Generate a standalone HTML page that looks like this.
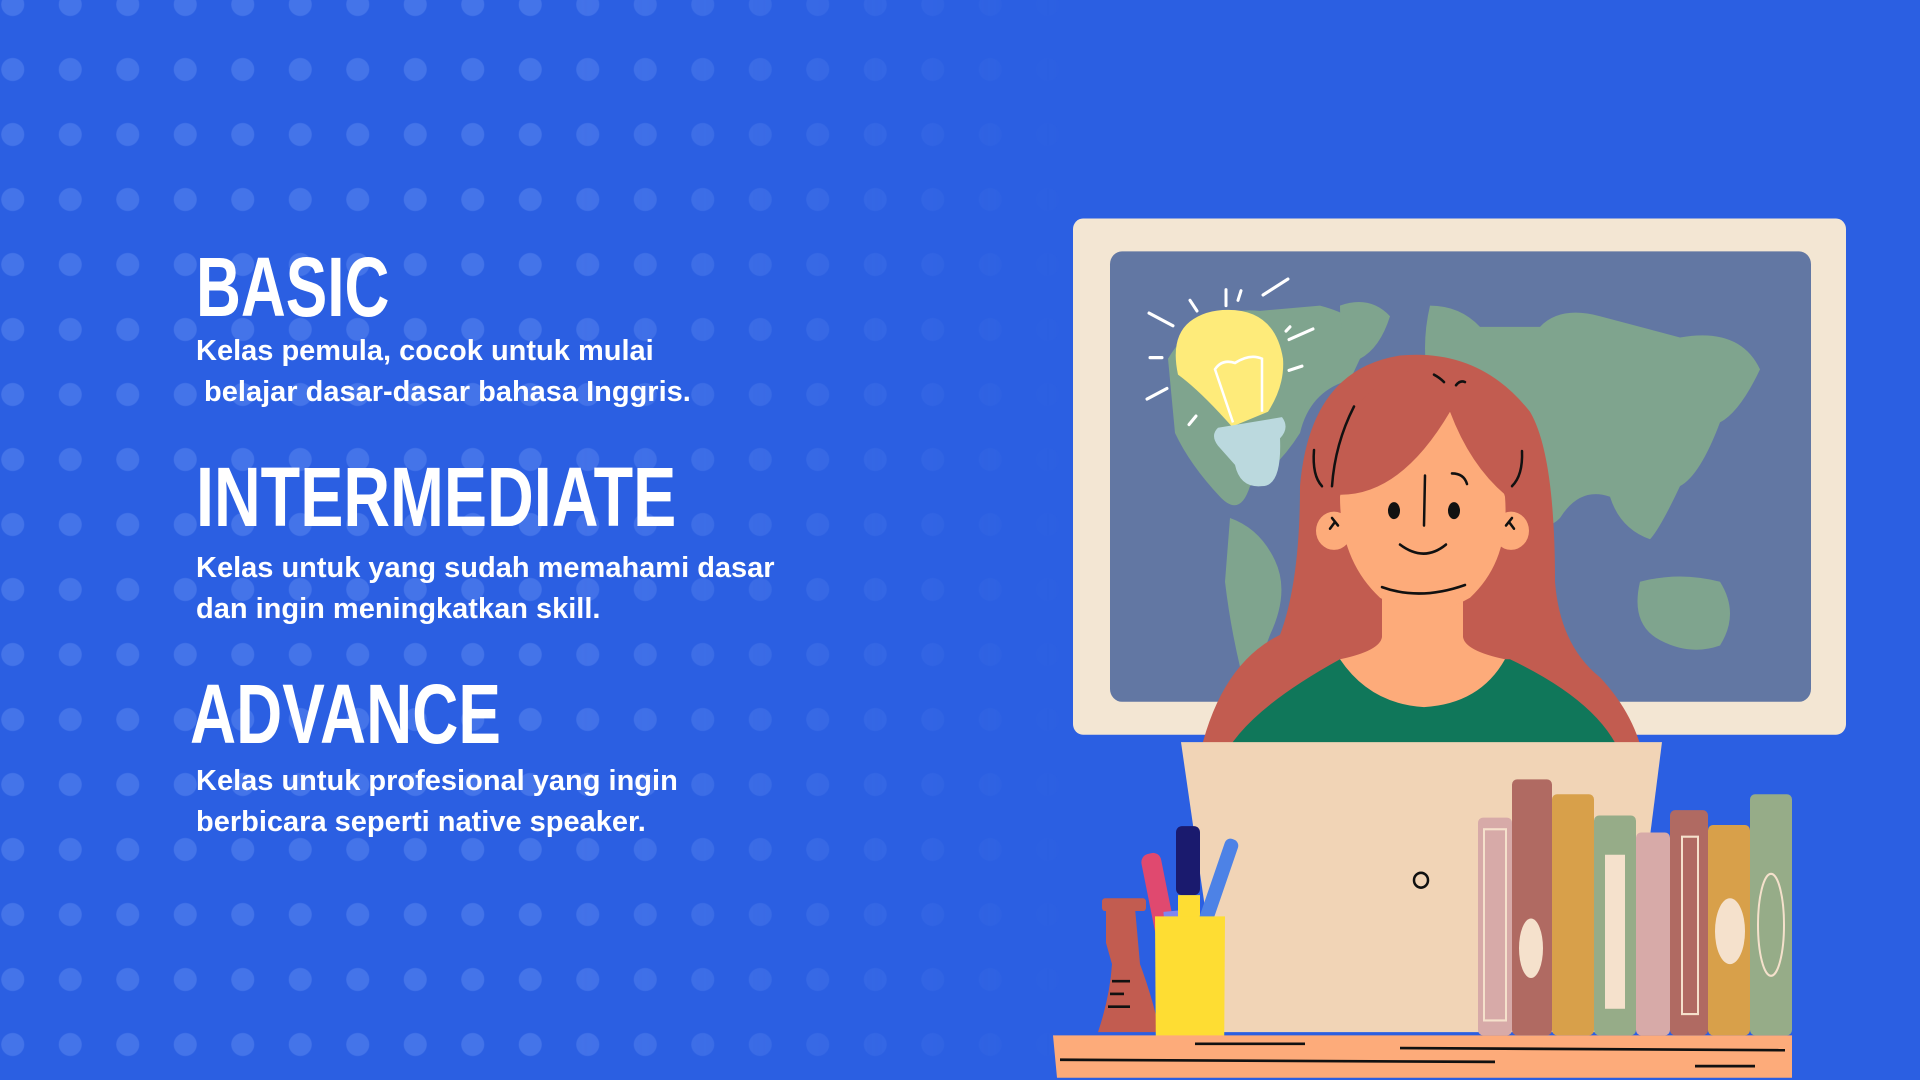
<!DOCTYPE html>
<html><head><meta charset="utf-8"><style>
html,body{margin:0;padding:0}
body{width:1920px;height:1080px;overflow:hidden;background:#2B5FE2;position:relative;font-family:"Liberation Sans",sans-serif}
.dots{position:absolute;left:0;top:0;width:1200px;height:1080px;
background-image:radial-gradient(circle at 50% 50%, rgba(110,150,245,.38) 0 11px, transparent 12px);
background-size:57.5px 65px;background-position:-16px -28px;
-webkit-mask-image:linear-gradient(90deg,#000 0%,#000 45%,transparent 90%);mask-image:linear-gradient(90deg,#000 0%,#000 45%,transparent 90%)}
.h{position:absolute;color:#fff;font-weight:bold;font-size:84px;line-height:1;transform-origin:0 0;white-space:nowrap}
.p{position:absolute;left:196px;color:#fff;font-weight:bold;font-size:29px;line-height:41px;white-space:pre}
</style></head><body>
<div class="dots"></div>
<div class="h" style="left:196px;top:245px;transform:scaleX(0.74)">BASIC</div>
<div class="h" style="left:196px;top:455px;transform:scaleX(0.77)">INTERMEDIATE</div>
<div class="h" style="left:190px;top:672px;transform:scaleX(0.76)">ADVANCE</div>
<div class="p" style="top:331px">Kelas pemula, cocok untuk mulai
 belajar dasar-dasar bahasa Inggris.</div>
<div class="p" style="top:548px">Kelas untuk yang sudah memahami dasar
dan ingin meningkatkan skill.</div>
<div class="p" style="top:761px">Kelas untuk profesional yang ingin
berbicara seperti native speaker.</div>
<svg style="position:absolute;left:0;top:0" width="1920" height="1080" viewBox="0 0 1920 1080">
<g transform="matrix(1 0 0 1.0622 0 -13.07)">
<rect x="1073" y="218" width="773" height="486" rx="10" fill="#F3E6D3"/>
<rect x="1110" y="249" width="701" height="424" rx="12" fill="#6277A3"/>
<g fill="#7FA48E">
<path d="M1168 350 Q1200 300 1260 305 L1320 300 Q1360 310 1370 330 L1350 370 Q1310 380 1300 420 Q1280 450 1250 470 Q1240 500 1220 480 Q1190 450 1175 420 Z"/>
<path d="M1230 500 Q1260 510 1275 540 Q1290 570 1270 610 Q1255 650 1240 640 Q1230 600 1225 560 Z"/>
<path d="M1340 300 Q1370 290 1390 310 Q1380 340 1360 350 Q1340 340 1340 300 Z"/>
<path d="M1430 300 Q1460 300 1480 320 L1540 320 Q1560 300 1600 310 L1680 330 Q1740 320 1760 360 Q1740 400 1720 410 Q1700 460 1680 470 Q1660 510 1650 520 Q1620 510 1610 480 Q1580 470 1560 500 Q1540 520 1520 480 Q1500 440 1470 430 Q1440 420 1430 380 Q1420 340 1430 300 Z"/>
<path d="M1640 560 Q1680 550 1720 560 Q1740 590 1720 620 Q1690 630 1660 615 Q1630 600 1640 560 Z"/>
<path d="M1440 460 Q1480 470 1490 510 Q1480 560 1460 560 Q1440 520 1440 460 Z"/>
</g>
<g stroke="#fff" stroke-width="3" stroke-linecap="round">
<line x1="1149" y1="307" x2="1173" y2="319"/><line x1="1190" y1="295" x2="1197" y2="305"/><line x1="1226" y1="285" x2="1226" y2="300"/><line x1="1241" y1="286" x2="1238" y2="295"/><line x1="1263" y1="290" x2="1288" y2="275"/><line x1="1289" y1="332" x2="1313" y2="322"/><line x1="1289" y1="361" x2="1302" y2="357"/><line x1="1150" y1="349" x2="1162" y2="349"/><line x1="1147" y1="388" x2="1167" y2="378"/><line x1="1189" y1="412" x2="1196" y2="404"/><line x1="1286" y1="324" x2="1290" y2="320"/>
</g>
<path d="M1228 304 Q1275 304 1283 350 Q1285 375 1268 400 L1232 414 Q1200 380 1178 365 Q1170 330 1190 315 Q1205 304 1228 304 Z" fill="#FEEB7A"/>
<path d="M1218 415 L1282 405 Q1290 415 1280 425 Q1282 470 1262 470 Q1240 472 1235 450 L1218 432 Q1210 422 1218 415 Z" fill="#BBD9DE"/>
<path d="M1233 410 L1215 360 Q1222 350 1235 354 Q1250 345 1262 350 L1262 400" fill="none" stroke="#fff" stroke-width="2.5"/>
<path d="M1196 740 Q1215 640 1280 610 Q1300 560 1300 470 Q1310 360 1400 347 Q1480 340 1530 400 Q1555 440 1555 560 Q1560 620 1600 650 Q1640 690 1646 740 Z" fill="#C25C50"/>
<path d="M1218 740 Q1230 690 1340 633 L1510 633 Q1615 680 1626 740 Z" fill="#10775A"/>
<path d="M1382 560 L1463 560 L1463 612 Q1465 625 1505 633 Q1480 675 1424 678 Q1370 675 1340 633 Q1380 625 1382 612 Z" fill="#FDAB7A"/>
<circle cx="1334" cy="512" r="18" fill="#FDAB7A"/><circle cx="1511" cy="512" r="18" fill="#FDAB7A"/>
<path d="M1340 480 Q1350 420 1400 400 Q1424 370 1450 400 Q1490 430 1505 480 Q1510 540 1470 575 Q1424 600 1380 575 Q1340 540 1340 480 Z" fill="#FDAB7A"/>
<path d="M1338 478 Q1400 480 1450 400 L1450 360 Q1380 350 1338 420 Z" fill="#C25C50"/>
<path d="M1450 400 Q1470 450 1505 478 L1505 420 Q1480 370 1450 360 Z" fill="#C25C50"/>
<g fill="none" stroke="#111" stroke-width="2.5" stroke-linecap="round">
<path d="M1354 395 Q1335 430 1332 470"/><path d="M1314 436 Q1312 460 1322 470"/><path d="M1522 437 Q1523 460 1512 470"/>
<path d="M1425 460 L1424 507"/><path d="M1452 458 Q1464 458 1467 468"/><path d="M1400 525 Q1424 542 1446 525"/>
<path d="M1382 565 Q1420 578 1465 563"/><path d="M1434 365 Q1440 368 1444 372"/><path d="M1456 375 Q1460 370 1465 372"/>
<path d="M1332 500 L1338 507 M1334 505 L1330 510"/><path d="M1512 500 L1506 507 M1510 505 L1514 510"/>
</g>
<ellipse cx="1394" cy="493" rx="6" ry="8" fill="#111"/><ellipse cx="1454" cy="493" rx="6" ry="8" fill="#111"/>
<path d="M1181 711 L1662 711 L1625 984 L1223 984 Z" fill="#F1D4B6"/>
<circle cx="1421" cy="841" r="7" fill="none" stroke="#111" stroke-width="2.5"/>
<path d="M1106 900 L1106 867 L1135 867 L1140 920 Q1152 950 1160 984 L1098 984 Q1110 950 1112 920 Z" fill="#C25C50"/>
<rect x="1102" y="858" width="44" height="12" rx="3" fill="#C25C50"/>
<g stroke="#111" stroke-width="2.5"><line x1="1112" y1="936" x2="1130" y2="936"/><line x1="1110" y1="948" x2="1124" y2="948"/><line x1="1108" y1="960" x2="1130" y2="960"/></g>
<rect x="1148" y="815" width="20" height="80" rx="8" fill="#E0496F" transform="rotate(-12 1158 855)"/>
<rect x="1166" y="870" width="16" height="60" fill="#7F86F0" transform="rotate(-5 1174 900)"/>
<rect x="1176" y="790" width="24" height="65" rx="6" fill="#1A1A6E"/>
<rect x="1178" y="855" width="22" height="80" fill="#FEDD33"/>
<rect x="1212" y="800" width="14" height="85" rx="6" fill="#4D82E6" transform="rotate(20 1219 842)"/>
<path d="M1155 875 L1225 875 L1224 1020 L1156 1020 Z" fill="#FEDD33"/>
<path d="M1053 987 L1792 987 L1792 1027 L1057 1027 Z" fill="#FDAB7A"/>
<g stroke="#111" stroke-width="2.5"><line x1="1195" y1="995" x2="1305" y2="995"/><line x1="1400" y1="999" x2="1785" y2="1001"/><line x1="1060" y1="1010" x2="1495" y2="1012"/><line x1="1695" y1="1016" x2="1755" y2="1016"/></g>
<g>
<rect x="1478" y="782" width="34" height="205" rx="5" fill="#D7AAA8"/>
<rect x="1512" y="746" width="40" height="241" rx="5" fill="#B06A62"/>
<rect x="1552" y="760" width="42" height="227" rx="5" fill="#D8A04A"/>
<rect x="1594" y="780" width="42" height="207" rx="5" fill="#96AC88"/>
<rect x="1636" y="796" width="34" height="191" rx="5" fill="#D7AAA8"/>
<rect x="1670" y="775" width="38" height="212" rx="5" fill="#B06A62"/>
<rect x="1708" y="789" width="42" height="198" rx="5" fill="#D8A04A"/>
<rect x="1750" y="760" width="42" height="227" rx="5" fill="#96AC88"/>
<rect x="1484" y="793" width="22" height="180" fill="none" stroke="#F5E1CC" stroke-width="2"/>
<ellipse cx="1531" cy="905" rx="12" ry="28" fill="#F5E1CC"/>
<rect x="1605" y="817" width="20" height="145" fill="#F5E1CC"/>
<rect x="1682" y="800" width="16" height="167" fill="none" stroke="#F5E1CC" stroke-width="2"/>
<ellipse cx="1730" cy="889" rx="15" ry="31" fill="#F5E1CC"/>
<ellipse cx="1771" cy="883" rx="13" ry="48" fill="none" stroke="#F5E1CC" stroke-width="2"/>
</g>
</g>
</svg>
</body></html>
